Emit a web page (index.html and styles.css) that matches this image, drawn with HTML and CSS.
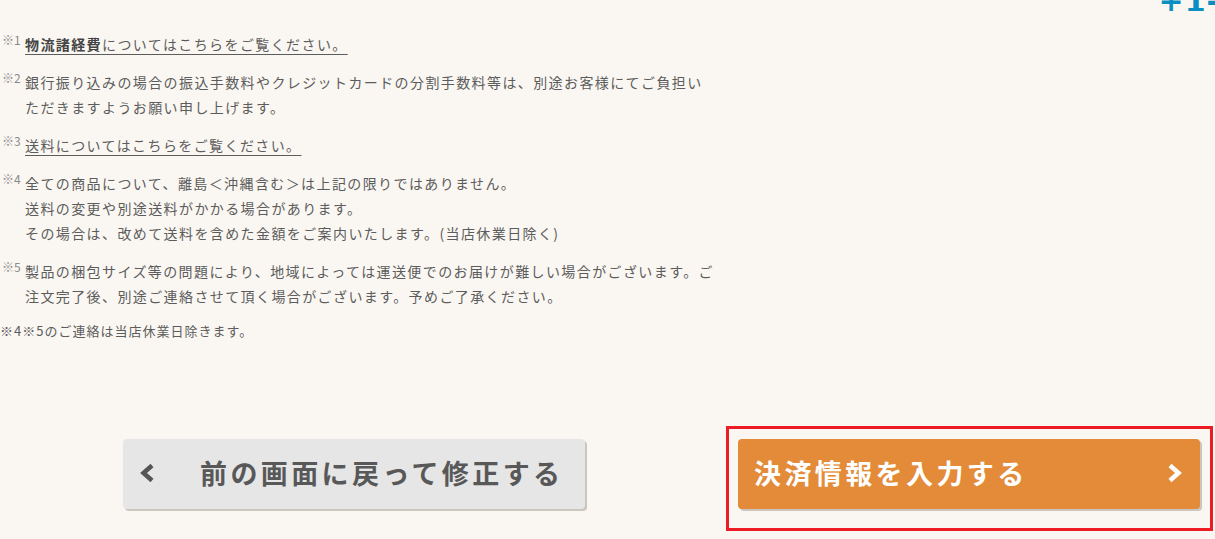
FILE: index.html
```html
<!DOCTYPE html>
<html lang="ja">
<head>
<meta charset="utf-8" />
<title>ご注文内容の確認</title>
<link rel="stylesheet" href="styles.css">
</head>
<body>
<div class="total">
    <span class="total-num">+1-</span>
</div>

<div class="notes">
    <div class="note">
        <span class="mark">※1</span>
        <p><a href="#"><b>物流諸経費</b>についてはこちらをご覧ください。</a></p>
    </div>
    <div class="note">
        <span class="mark">※2</span>
        <p>銀行振り込みの場合の振込手数料やクレジットカードの分割手数料等は、別途お客様にてご負担いただきますようお願い申し上げます。</p>
    </div>
    <div class="note">
        <span class="mark">※3</span>
        <p><a href="#">送料についてはこちらをご覧ください。</a></p>
    </div>
    <div class="note">
        <span class="mark">※4</span>
        <p>全ての商品について、離島＜沖縄含む＞は上記の限りではありません。<br />送料の変更や別途送料がかかる場合があります。<br />その場合は、改めて送料を含めた金額をご案内いたします。(当店休業日除く)</p>
    </div>
    <div class="note">
        <span class="mark">※5</span>
        <p>製品の梱包サイズ等の問題により、地域によっては運送便でのお届けが難しい場合がございます。ご注文完了後、別途ご連絡させて頂く場合がございます。予めご了承ください。</p>
    </div>
    <p class="note-last">※4※5のご連絡は当店休業日除きます。</p>
</div>

<div class="btns">
    <a class="btn btn-back" href="#">
        <svg class="arrow" width="16" height="20" viewBox="0 0 16 20"><polyline points="13,2.5 4.5,10 13,17.5" fill="none" stroke="#555" stroke-width="4.5" /></svg>
        前の画面に戻って修正する
    </a>
    <div class="btn-next-wrap">
        <a class="btn btn-next" href="#">
            決済情報を入力する
            <svg class="arrow" width="16" height="20" viewBox="0 0 16 20"><polyline points="3,2.5 11.5,10 3,17.5" fill="none" stroke="#fff" stroke-width="4.5" /></svg>
        </a>
    </div>
</div>
</body>
</html>
```

FILE: styles.css
```css
*{ margin:0; padding:0; box-sizing:border-box;}
body{ background:#faf7f2; font-family:"Noto Sans CJK JP","Noto Sans",sans-serif; color:#5c5c5c; width:1215px; height:539px; overflow:hidden;}
a{ color:inherit;}

.total{ height:11px; overflow:hidden; text-align:right;}
.total-num{ display:block; font-family:"DejaVu Sans",sans-serif; font-weight:bold; font-size:30px; line-height:30px; margin-top:-13px; margin-right:-5px; color:#0a8fc2; letter-spacing:1px;}

.notes{ padding:21px 0 0 2px; width:720px;}
.note{ display:flex; margin-bottom:13px;}
.note .mark{ width:23px; flex:none; font-size:12px; line-height:16px; color:#8a8a8a; letter-spacing:0;}
.note p{ font-size:14px; line-height:25px; letter-spacing:1.4px; width:690px;}
.note a{ text-decoration:underline; text-underline-offset:4px; color:#5c5c5c;}
.note b{ font-weight:bold; color:#444;}
.note-last{ font-size:13px; line-height:18px; letter-spacing:1px; margin-left:-2px; margin-top:2px;}

.btns{ display:flex; align-items:flex-start; padding:86px 0 0 123px;}
.btn{ display:flex; align-items:center; height:70px; width:462px; border-radius:4px; text-decoration:none; font-weight:bold; font-size:27px; letter-spacing:3.4px; box-shadow:2px 2px 0 #cbc6c0; padding-bottom:4px;}
.btn .arrow{ flex:none; display:block; margin-top:2px;}
.btn-back{ margin-top:13px; background:#e6e6e6; color:#585858; padding-left:16px;}
.btn-back .arrow{ margin-right:45px;}
.btn-next-wrap{ margin-left:141px; border:3px solid #ed1c24; padding:10px 10px 19px 9px;}
.btn-next{ background:#e38b39; color:#fff; padding-left:16px; justify-content:space-between; padding-right:17px;}
```
